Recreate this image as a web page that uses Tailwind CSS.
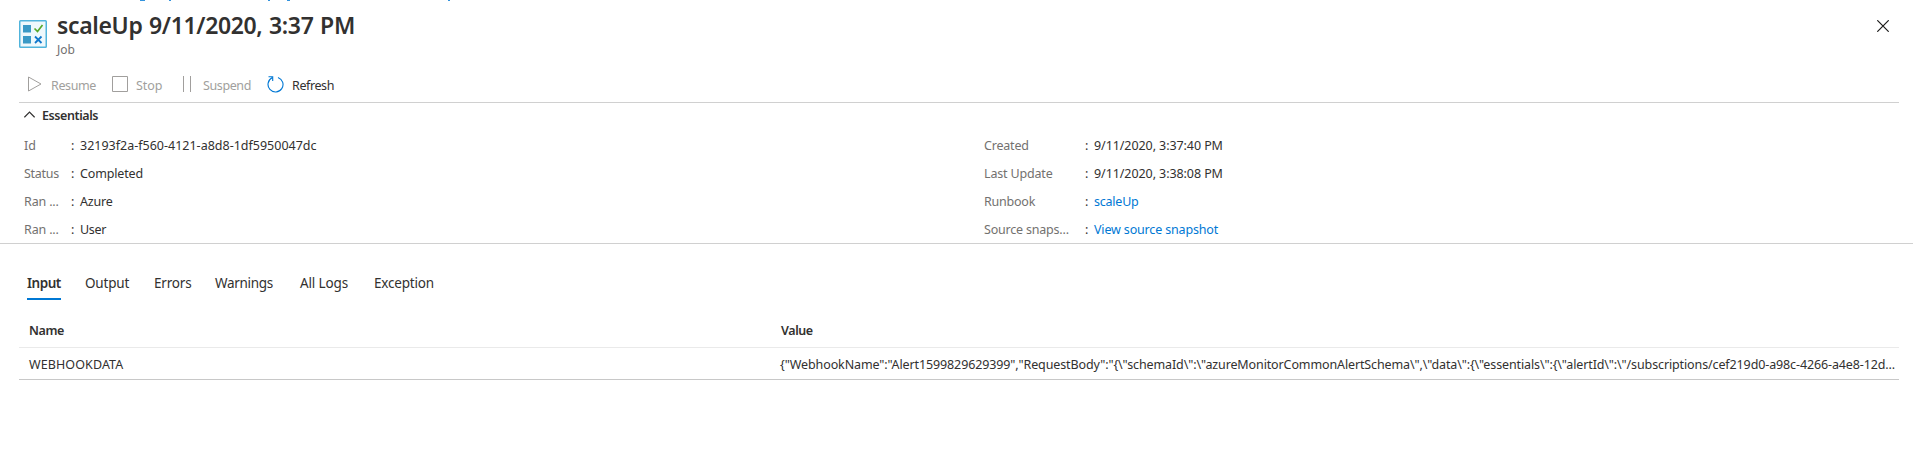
<!DOCTYPE html>
<html lang="en">
<head>
<meta charset="utf-8">
<title>scaleUp job</title>
<script src="https://cdn.jsdelivr.net/npm/@tailwindcss/browser@4"></script>
</head>
<body class="relative h-[468px] overflow-hidden bg-white font-['Noto_Sans','Open_Sans',sans-serif] text-[12.5px] text-[#323130]">
  <!-- lower edge of the breadcrumb row -->
  <svg class="absolute left-0 top-0" width="460" height="1" fill="#0078d4"><path d="M140 0h5v1h-5zM169 0h2v1h-2zM268 0h2v1h-2zM287 0h3v1h-3zM448 0h2v1h-2z" fill-opacity=".8"/></svg>

  <header class="flex h-[68px] items-start pl-[19px] pr-6 pt-[9px]">
    <svg class="mt-[11px] shrink-0" width="28" height="28" viewBox="0 0 28 28" fill="none">
      <rect x=".75" y=".75" width="26.5" height="26.5" rx=".8" fill="#eef8fc" stroke="#50b4dc" stroke-width="1.5"/>
      <path d="M4 5h8v7.500H4zM4 16h8v7.500H4z" fill="#3999c6"/>
      <path d="M15.500 8.500l3 3L23.500 5" stroke="#57a82c" stroke-width="1.700"/>
      <path d="M16 16.500l6.500 6.500M22.500 16.500L16 23" stroke="#0f77cc" stroke-width="1.800"/>
    </svg>
    <div class="ml-[10px] grow">
      <h1 class="text-[23px]/8 font-semibold tracking-[-0.35px] [word-spacing:1px]">scaleUp 9/11/2020, 3:37 PM</h1>
      <p class="mt-px text-xs/4 text-[#73716f]">Job</p>
    </div>
    <svg class="mt-[11px] shrink-0" width="12" height="12" viewBox="0 0 12 12" stroke="#1b1a19" stroke-width="1.200"><path d="M.3.3l11.400 11.400M11.700.3L.3 11.700"/></svg>
  </header>

  <section class="ml-[19px] mr-[14px] flex h-[35px] items-center border-b border-[#d0d0d0] leading-5 text-[#a19f9d]">
    <div class="flex w-[92px] items-center pl-[9px]">
      <svg class="mr-[9px] -mt-0.5" width="14" height="16" viewBox="0 0 14 16" fill="none" stroke="#a19f9d"><path d="M.5 1v14L13 8z"/></svg>
      <span class="mt-0.5 tracking-[-0.38px]">Resume</span>
    </div>
    <div class="flex w-[72px] items-center pl-px">
      <svg class="mr-2 -mt-0.5" width="16" height="16" fill="none" stroke="#a19f9d"><path d="M.5.5h15v15H.5z"/></svg>
      <span class="mt-0.5 tracking-[-0.05px]">Stop</span>
    </div>
    <div class="flex w-[84px] items-center">
      <svg class="mr-[12px] -mt-0.5" width="8" height="16" fill="none" stroke="#a19f9d"><path d="M.5 0v16M7.500 0v16"/></svg>
      <span class="mt-0.5 tracking-[-0.4px]">Suspend</span>
    </div>
    <div class="flex items-center text-[#323130]">
      <svg class="mr-2 -mt-0.5" width="17" height="17" viewBox="0 0 17 17" fill="none" stroke="#0078d4" stroke-width="1.100"><path d="M11 1.400a7.500 7.500 0 1 1-5.900.4M1.500.8h4.200V5"/></svg>
      <span class="mt-0.5 tracking-[-0.4px]">Refresh</span>
    </div>
  </section>

  <section class="border-b border-[#d0d0d0]">
    <div class="flex h-[29px] items-start pl-6">
      <svg class="mt-2 mr-[7px]" width="11" height="7" viewBox="0 0 11 7" fill="none" stroke="#323130" stroke-width="1.200"><path d="M.4 6.300L5.500 1l5.100 5.300"/></svg>
      <h2 class="leading-[26px] font-semibold tracking-[-0.42px]">Essentials</h2>
    </div>
    <div class="flex h-[111px] items-start leading-7">
      <dl class="grid w-[960px] grid-cols-[47px_9px_1fr] pl-6 whitespace-nowrap">
        <dt class="text-[#73716f]">Id</dt><span>:</span><dd>32193f2a-f560-4121-a8d8-1df5950047dc</dd>
        <dt class="tracking-[-0.27px] text-[#73716f]">Status</dt><span>:</span><dd class="tracking-[-0.15px]">Completed</dd>
        <dt class="tracking-[-0.15px] text-[#73716f]">Ran ...</dt><span>:</span><dd class="tracking-[-0.2px]">Azure</dd>
        <dt class="tracking-[-0.15px] text-[#73716f]">Ran ...</dt><span>:</span><dd class="tracking-[-0.3px]">User</dd>
      </dl>
      <dl class="grid grow grid-cols-[101px_9px_1fr] pl-6 whitespace-nowrap">
        <dt class="tracking-[-0.2px] text-[#73716f]">Created</dt><span>:</span><dd class="tracking-[-0.08px]">9/11/2020, 3:37:40 PM</dd>
        <dt class="tracking-[-0.17px] text-[#73716f]">Last Update</dt><span>:</span><dd class="tracking-[-0.08px]">9/11/2020, 3:38:08 PM</dd>
        <dt class="tracking-[-0.23px] text-[#73716f]">Runbook</dt><span>:</span><dd class="tracking-[-0.23px] text-[#0078d4]">scaleUp</dd>
        <dt class="tracking-[-0.2px] text-[#73716f]">Source snaps...</dt><span>:</span><dd class="tracking-[-0.16px] text-[#0078d4]">View source snapshot</dd>
      </dl>
    </div>
  </section>

  <nav class="mt-[26px] flex h-[30px] gap-6 pl-[27px] text-[13.5px]/[26px] whitespace-nowrap">
    <span class="w-[34px] border-b-2 border-[#0078d4] font-semibold tracking-[-0.45px]">Input</span>
    <span class="w-[45px] tracking-[-0.2px]">Output</span>
    <span class="w-[37px] tracking-[-0.2px]">Errors</span>
    <span class="w-[61px] tracking-[-0.3px]">Warnings</span>
    <span class="w-[50px] tracking-[-0.12px]">All Logs</span>
    <span class="tracking-[-0.2px]">Exception</span>
  </nav>

  <section class="mt-[13px] ml-[19px] mr-[14px] whitespace-nowrap">
    <div class="flex h-[35px] border-b border-[#eaeaea] pl-[10px] leading-9 font-semibold">
      <span class="w-[752px] tracking-[-0.4px]">Name</span>
      <span class="tracking-[-0.4px]">Value</span>
    </div>
    <div class="flex h-8 border-b border-[#c8c8c8] pl-[10px] leading-[33px]">
      <span class="w-[751px] shrink-0 tracking-[0.1px]">WEBHOOKDATA</span>
      <span class="tracking-[-0.12px]">{"WebhookName":"Alert1599829629399","RequestBody":"{\"schemaId\":\"azureMonitorCommonAlertSchema\",\"data\":{\"essentials\":{\"alertId\":\"/subscriptions/cef219d0-a98c-4266-a4e8-12d...</span>
    </div>
  </section>
</body>
</html>
